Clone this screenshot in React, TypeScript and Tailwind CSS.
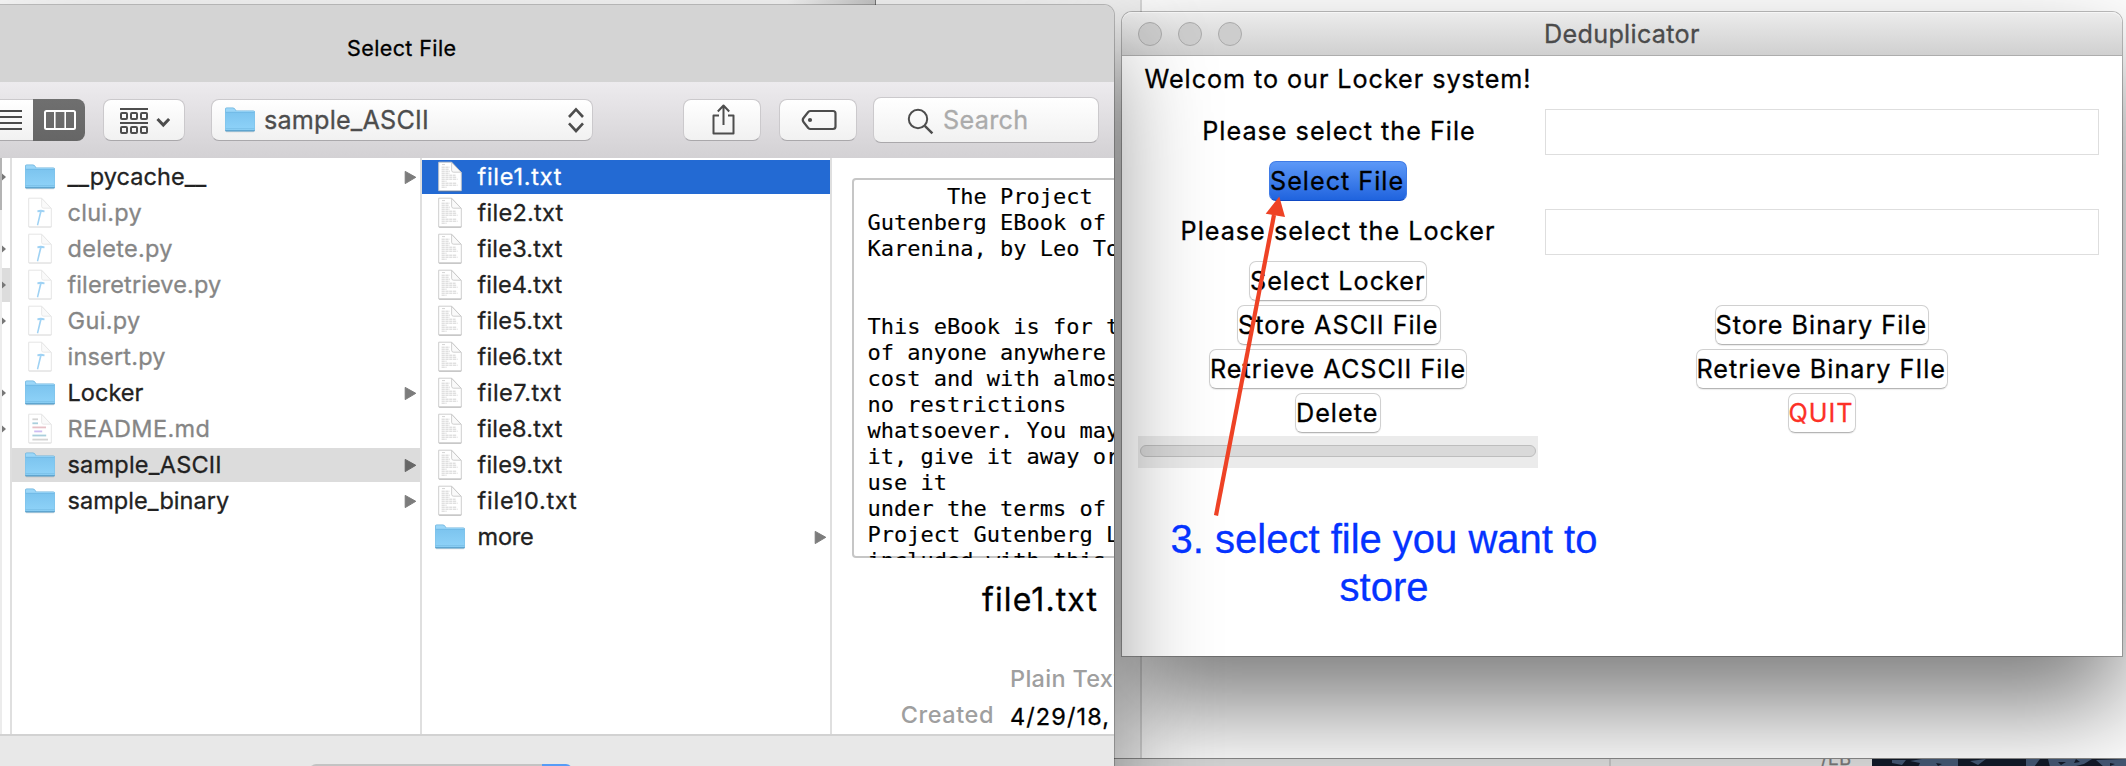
import React from 'react';

function FolderIcon({ className = '' }: { className?: string }) {
  return (
    <svg viewBox="0 0 30 26" className={`h-[26px] w-[30px] shrink-0 ${className}`}>
      <defs>
        <linearGradient id="folderFront" x1="0" y1="0" x2="0" y2="1">
          <stop offset="0" stopColor="#7cc4ef" />
          <stop offset="1" stopColor="#8ed2f8" />
        </linearGradient>
      </defs>
      <rect x="0.5" y="22.5" width="29" height="2.8" rx="1" fill="#000" opacity="0.16" />
      <path d="M0 2.2Q0 0.6 1.6 0.6H7.6Q9 0.6 9.8 1.6L11.4 3.4H28.4Q30 3.4 30 5V23Q30 24.4 28.6 24.4H1.4Q0 24.4 0 23Z" fill="#6db4de" />
      <path d="M0.6 2.4Q0.6 1.2 1.8 1.2H7.6Q8.8 1.2 9.4 2L11 4H28.2Q29.4 4 29.4 5.2V23H0.6Z" fill="#9bd6f8" />
      <rect x="0.6" y="5" width="28.8" height="18" fill="url(#folderFront)" />
      <rect x="0.6" y="4.8" width="28.8" height="0.9" fill="#6fb8e4" />
      <rect x="0.6" y="21" width="28.8" height="0.7" fill="#77bde6" />
      <rect x="0.4" y="22.9" width="29.2" height="1.2" fill="#5fa5cf" />
    </svg>
  );
}

function Page({ children, faded }: { children?: React.ReactNode; faded?: boolean }) {
  return (
    <svg viewBox="0 0 24 32" className="h-8 w-6 shrink-0">
      <rect x="0.8" y="28" width="22.6" height="3" rx="1" fill="#000" opacity={faded ? 0.08 : 0.22} />
      <path d="M0.7 1.2H13.6L23.3 11.4V29.8H0.7Z" fill="#fff" stroke={faded ? '#e2e2e2' : '#c8c8c8'} strokeWidth="0.9" />
      {children}
      <path d="M13.6 1.4V9.2Q13.6 11.2 15.6 11.2H23Z" fill="#fafafa" stroke={faded ? '#e4e4e4' : '#c4c4c4'} strokeWidth="0.8" />
    </svg>
  );
}

function TextIcon() {
  return (
    <Page>
      <path
        d="M4 3.6h3M3.6 6.2h8M3.6 8.2h7.6M3.6 10.2h8.4M3.6 12.2h8M3.6 14.2h14M3.6 16.2h15M3.6 18.2h16M3.6 20.2h5M3.6 22.2h15M3.6 24.2h16M3.6 26.2h5"
        stroke="#c8c8c8"
        strokeWidth="0.8"
        strokeDasharray="3.2 0.6"
      />
    </Page>
  );
}

function PyIcon() {
  return (
    <Page faded>
      <path d="M9.2 13.6Q12.4 12.2 16.6 13.4L16.4 15.2L13.6 14.9L10.2 28.4L8.8 28L11.8 14.9L9.6 15.3Z" fill="#9fd2f4" />
    </Page>
  );
}

function MdIcon() {
  return (
    <Page faded>
      <g strokeWidth="1.8">
        <path d="M4.4 6.3h5.6" stroke="#d4d4d4" />
        <path d="M4.4 10.3h5.6" stroke="#a9cfdc" />
        <path d="M4.4 14.4h13.6" stroke="#e6c0c6" />
        <path d="M6.2 18.4h8" stroke="#cdbdf2" />
        <path d="M4.4 22.5h13.8" stroke="#a9cfdc" />
        <path d="M4.4 26.6h15.6" stroke="#d4d4d4" />
      </g>
    </Page>
  );
}

function Arrow({ dark }: { dark?: boolean }) {
  return (
    <svg viewBox="0 0 13 15" className="h-[15px] w-[13px] shrink-0">
      <path d="M1.2 1.4L11.8 7.3L1.2 13.6Z" fill={dark ? '#666' : '#7c7c7c'} stroke={dark ? '#666' : '#7c7c7c'} strokeLinejoin="round" />
    </svg>
  );
}

type Item = { name: string; kind: 'folder' | 'py' | 'md' | 'txt'; track: string; selected?: 'blue' | 'gray' };

const folderItems: Item[] = [
  { name: '__pycache__', kind: 'folder', track: 'tracking-[0.05px]' },
  { name: 'clui.py', kind: 'py', track: 'tracking-[0.27px]' },
  { name: 'delete.py', kind: 'py', track: 'tracking-[0.29px]' },
  { name: 'fileretrieve.py', kind: 'py', track: 'tracking-[0.11px]' },
  { name: 'Gui.py', kind: 'py', track: 'tracking-[0.36px]' },
  { name: 'insert.py', kind: 'py', track: 'tracking-[0.19px]' },
  { name: 'Locker', kind: 'folder', track: 'tracking-[0.03px]' },
  { name: 'README.md', kind: 'md', track: 'tracking-[0.35px]' },
  { name: 'sample_ASCII', kind: 'folder', track: 'tracking-[0.22px]', selected: 'gray' },
  { name: 'sample_binary', kind: 'folder', track: 'tracking-[0.06px]' },
];

const sampleItems: Item[] = [
  { name: 'file1.txt', kind: 'txt', track: 'tracking-[0.74px]', selected: 'blue' },
  { name: 'file2.txt', kind: 'txt', track: 'tracking-[0.28px]' },
  { name: 'file3.txt', kind: 'txt', track: 'tracking-[0.22px]' },
  { name: 'file4.txt', kind: 'txt', track: 'tracking-[0.12px]' },
  { name: 'file5.txt', kind: 'txt', track: 'tracking-[0.25px]' },
  { name: 'file6.txt', kind: 'txt', track: 'tracking-[0.2px]' },
  { name: 'file7.txt', kind: 'txt', track: 'tracking-[0.5px]' },
  { name: 'file8.txt', kind: 'txt', track: 'tracking-[0.2px]' },
  { name: 'file9.txt', kind: 'txt', track: 'tracking-[0.2px]' },
  { name: 'file10.txt', kind: 'txt', track: 'tracking-[0.78px]' },
  { name: 'more', kind: 'folder', track: 'tracking-[-0.21px]' },
];

function Row({ item }: { item: Item }) {
  const bg = item.selected === 'blue' ? 'bg-[#236ad3]' : item.selected === 'gray' ? 'bg-[#dcdcdc]' : '';
  const muted = item.kind === 'py' || item.kind === 'md';
  const color = item.selected === 'blue' ? 'text-white' : muted ? 'text-[#868686]' : 'text-[#222]';
  return (
    <div className={`flex h-[34px] shrink-0 items-center pl-[13px] pr-[3px] ${bg}`}>
      <div className="flex w-[42.5px] items-center">
        {item.kind === 'folder' && <FolderIcon />}
        {item.kind !== 'folder' && (
          <div className="pb-px pl-[3px]">
            {item.kind === 'txt' && <TextIcon />}
            {item.kind === 'py' && <PyIcon />}
            {item.kind === 'md' && <MdIcon />}
          </div>
        )}
      </div>
      <span className={`flex-1 whitespace-nowrap text-[23.5px] leading-[34px] ${color} ${item.track}`}>{item.name}</span>
      {item.kind === 'folder' && <Arrow dark={item.selected === 'gray'} />}
    </div>
  );
}

const toolButton =
  'flex shrink-0 items-center border border-[#cbc9cc] border-b-[#aaa8ab] bg-linear-to-b from-white to-[#f1f1f1] rounded-[8px]';

function Toolbar() {
  return (
    <div className="flex h-[76px] shrink-0 items-center bg-linear-to-b from-[#edebee] to-[#d3d1d4]">
      <div className="flex h-[42px] w-[85px] shrink-0 overflow-hidden rounded-r-[8px]">
        <div className="h-full w-[33px] border-y border-t-[#cbc9cc] border-b-[#aaa8ab] bg-linear-to-b from-white to-[#f1f1f1]">
          <svg viewBox="0 0 33 40" className="h-10 w-[33px]">
            <path d="M0 11h22M0 17h22M0 23h22M0 29h22" stroke="#4a4a4a" strokeWidth="2" />
          </svg>
        </div>
        <div className="h-full w-[52px] bg-linear-to-b from-[#6f6f6f] to-[#666]">
          <svg viewBox="0 0 52 42" className="h-[42px] w-[52px]">
            <rect x="12" y="12" width="30" height="18" rx="1.5" fill="none" stroke="#fff" strokeWidth="2" />
            <path d="M21.8 12v18M32.2 12v18" stroke="#fff" strokeWidth="1.6" />
          </svg>
        </div>
      </div>
      <div className={`ml-[18px] h-[42px] w-[82px] ${toolButton}`}>
        <svg viewBox="0 0 80 40" className="h-10 w-20" fill="none" stroke="#4d4d4d">
          <path d="M16 9h28M16 23h28" strokeWidth="2" />
          <g strokeWidth="2">
            <rect x="17" y="13" width="6" height="6" rx="1" />
            <rect x="27" y="13" width="6" height="6" rx="1" />
            <rect x="37" y="13" width="6" height="6" rx="1" />
            <rect x="17" y="27" width="6" height="6" rx="1" />
            <rect x="27" y="27" width="6" height="6" rx="1" />
            <rect x="37" y="27" width="6" height="6" rx="1" />
          </g>
          <path d="M53.5 19l5.8 6l5.8-6" strokeWidth="3" />
        </svg>
      </div>
      <div className={`ml-[26px] h-[42px] w-[382px] pl-[13px] pr-[7px] ${toolButton}`}>
        <FolderIcon />
        <span className="ml-[9px] flex-1 text-[25.2px] leading-10 tracking-[0.19px] text-[#4d4d4d]">sample_ASCII</span>
        <svg viewBox="0 0 18 26" className="h-[26px] w-[18px]" fill="none" stroke="#4d4d4d" strokeWidth="2.6">
          <path d="M2 10l7-7.600l7 7.600M2 16.400l7 7.600l7-7.600" />
        </svg>
      </div>
      <div className={`ml-[90px] h-[42px] w-[78px] ${toolButton}`}>
        <svg viewBox="0 0 76 40" className="h-10 w-[76px]" fill="none" stroke="#4d4d4d" strokeWidth="2">
          <path d="M35 15.500h-5.500v18h20v-18h-5.500M39.500 25V6M33.800 11.500l5.700-6l5.700 6" strokeLinejoin="round" />
        </svg>
      </div>
      <div className={`ml-[18px] h-[42px] w-[78px] ${toolButton}`}>
        <svg viewBox="0 0 76 40" className="h-10 w-[76px]">
          <path d="M30.500 11H53q2.500 0 2.500 2.500v13q0 2.500-2.500 2.500H30.500q-1.300 0-2.300-1L23.500 22q-1.500-2 0-4L28.200 12q1-1 2.300-1z" fill="none" stroke="#4d4d4d" strokeWidth="2.200" />
          <circle cx="30" cy="20" r="2.100" fill="#4d4d4d" />
        </svg>
      </div>
      <div className={`ml-4 h-[46px] w-[226px] ${toolButton}`}>
        <svg viewBox="0 0 70 44" className="h-11 w-[70px]" fill="none" stroke="#4d4d4d">
          <circle cx="44" cy="21" r="9.200" strokeWidth="2" />
          <path d="M50.800 27.800l7.600 7.600" strokeWidth="2.400" />
        </svg>
        <span className="-ml-px text-[25.2px] leading-[44px] tracking-[0.3px] text-[#ababab]">Search</span>
      </div>
    </div>
  );
}

const preview = [
  '      The Project',
  'Gutenberg EBook of',
  'Karenina, by Leo To',
  '',
  '',
  'This eBook is for t',
  'of anyone anywhere',
  'cost and with almos',
  'no restrictions',
  'whatsoever. You may',
  'it, give it away or',
  'use it',
  'under the terms of',
  'Project Gutenberg L',
  'included with this',
].join('\n');

const parentRows = [true, false, true, true, true, false, true, true];

function SelectFileDialog() {
  return (
    <section className="absolute left-0 top-[5px] flex h-[861px] w-[1114px] flex-col overflow-hidden rounded-tr-[10px] bg-[#e8e8e8] shadow-[0_0_0_1px_rgba(0,0,0,0.22),0_50px_100px_rgba(0,0,0,0.42)]">
      <header className="flex h-[77px] shrink-0 bg-[#d4d4d4] pl-[347px] pt-[10px]">
        <h1 className="text-[21.5px] leading-[66px] tracking-[0.4px] text-black">Select File</h1>
      </header>
      <Toolbar />
      <div className="flex h-[576px] shrink-0 bg-white">
        <div className="flex w-[2px] flex-col bg-[#ececec]">
          <div className="h-[52px] bg-[#b4b4b4]" />
        </div>
        <div className="flex w-[10px] flex-col gap-[2px] border-r-2 border-[#dfdfdf] pt-[2px]">
          {parentRows.map((arrow, i) => (
            <div key={i} className={`flex h-[34px] items-center ${i === 3 ? 'bg-[#dcdcdc]' : ''}`}>
              {arrow && (
                <svg viewBox="0 0 4 8" className="h-2 w-1">
                  <path d="M0 0.500L4 4L0 7.500z" fill="#777" />
                </svg>
              )}
            </div>
          ))}
        </div>
        <div className="flex w-[410px] flex-col gap-[2px] border-r-2 border-[#dfdfdf] pt-[2px]">
          {folderItems.map((item) => (
            <Row key={item.name} item={item} />
          ))}
        </div>
        <div className="flex w-[410px] flex-col gap-[2px] border-r-2 border-[#dfdfdf] pt-[2px]">
          {sampleItems.map((item) => (
            <Row key={item.name} item={item} />
          ))}
        </div>
        <div className="flex w-[282px] flex-col overflow-hidden pl-5 pt-5">
          <pre className="h-[380px] w-[380px] shrink-0 overflow-hidden rounded-[4px] pl-[15.5px] pt-[6px] font-['DejaVu_Sans_Mono',monospace] text-[22px] leading-[26px] text-black shadow-[inset_0_0_0_2px_#c6c6c6] [-webkit-text-stroke:0.15px]">
            {preview}
          </pre>
          <p className="mt-5 pl-[130px] text-[32px] leading-[44px] tracking-[1.1px] text-black">file1.txt</p>
          <dl className="mt-[39px] grid w-[380px] grid-cols-[142px_1fr] gap-x-4 text-[23.5px] leading-9">
            <dt />
            <dd className="font-medium tracking-[0.3px] text-[#9f9f9f] [-webkit-text-stroke:0]">Plain Text</dd>
            <dt className="text-right font-medium tracking-[0.55px] text-[#9f9f9f] [-webkit-text-stroke:0]">Created</dt>
            <dd className="pt-[2px] tracking-[1.1px] text-black">4/29/18,</dd>
          </dl>
        </div>
      </div>
      <footer className="flex h-[100px] shrink-0 border-t-2 border-[#d2d2d2] pl-[310px] pt-7">
        <div className="h-11 w-[232px] rounded-l-[6px] border-2 border-r-0 border-[#c3c3c3] bg-white" />
        <div className="h-11 w-[30px] rounded-r-[6px] bg-[#579cf6]" />
      </footer>
    </section>
  );
}

const tk = 'text-[25.2px] tracking-[1px] whitespace-nowrap';

function TkButton({ children, width, variant }: { children: string; width: string; variant?: 'primary' | 'quit' }) {
  const look =
    variant === 'primary'
      ? 'bg-linear-to-b from-[#5c98f7] to-[#1f63de] border-[#3f7be6] border-b-[#0f49c4]'
      : 'bg-white/80 border-[#d0d0d0] border-b-[#b5b5b5] shadow-[0_1px_1px_rgba(0,0,0,0.08)]';
  return (
    <button className={`flex h-10 items-center rounded-[7px] border text-left leading-[38px] ${tk} ${look} ${width} ${variant === 'quit' ? 'text-[#fc3127]' : 'text-black'}`}>
      {children}
    </button>
  );
}

function Pair({ left, right }: { left: React.ReactNode; right?: React.ReactNode }) {
  return (
    <div className="grid grid-cols-[400px_567px]">
      <div className="flex justify-center">{left}</div>
      <div className="flex justify-center">{right}</div>
    </div>
  );
}

function DeduplicatorWindow() {
  return (
    <section className="absolute left-[1122px] top-3 flex h-[644px] w-[1000px] flex-col rounded-t-[10px] bg-white shadow-[0_0_0_1px_rgba(0,0,0,0.25),0_50px_100px_rgba(0,0,0,0.52)]">
      <header className="flex h-11 shrink-0 items-center rounded-t-[10px] border-b border-[#adadad] bg-linear-to-b from-[#ececec] to-[#d0d0d0] pl-4 shadow-[inset_0_1px_0_#f6f6f6]">
        <div className="flex w-[406px] gap-4">
          <span className="size-6 rounded-full border border-[#aaa] bg-[#cdcdcd]" />
          <span className="size-6 rounded-full border border-[#aaa] bg-[#cdcdcd]" />
          <span className="size-6 rounded-full border border-[#aaa] bg-[#cdcdcd]" />
        </div>
        <h2 className="pt-px text-[25.2px] leading-[44px] tracking-[0.3px] text-[#4b4b4b]">Deduplicator</h2>
      </header>
      <div className="flex flex-col pl-4">
        <p className="h-[45px] whitespace-nowrap pl-[6.5px] text-[25.2px] leading-[46px] tracking-[0.94px] text-black">Welcom to our Locker system!</p>
        <Pair
          left={<label className={`h-[60px] pl-[2px] leading-[60px] text-black ${tk}`}>Please select the File</label>}
          right={<div className="mt-2 h-[46px] w-[554px] border border-[#dedede] bg-white" />}
        />
        <Pair left={<TkButton width="w-[138px]" variant="primary">Select File</TkButton>} />
        <Pair
          left={<label className={`h-[60px] leading-[60px] text-black ${tk}`}>Please select the Locker</label>}
          right={<div className="mt-2 h-[46px] w-[554px] border border-[#dedede] bg-white" />}
        />
        <div className="flex flex-col gap-1">
          <Pair left={<TkButton width="w-[178px]">Select Locker</TkButton>} />
          <Pair
            left={<TkButton width="ml-[2px] w-[204px]">Store ASCII File</TkButton>}
            right={<TkButton width="w-[214px]">Store Binary File</TkButton>}
          />
          <Pair
            left={<TkButton width="w-[258px]">Retrieve ACSCII File</TkButton>}
            right={<TkButton width="w-[252px]">Retrieve Binary FIle</TkButton>}
          />
          <Pair left={<TkButton width="w-[86px]">Delete</TkButton>} right={<TkButton width="w-[68px]" variant="quit">QUIT</TkButton>} />
        </div>
        <div className="mt-[3px] h-8 w-[400px] bg-[#ebebeb] px-[2px] pt-[9px]">
          <div className="h-3 rounded-full border border-[#bdbdbd] bg-[#d9d9d9]" />
        </div>
      </div>
    </section>
  );
}

function Backdrop() {
  return (
    <div className="absolute inset-0 flex flex-col">
      <div className="flex h-[758px]">
        <div className="w-[875px] bg-linear-to-r from-[#f7f7f7] from-90% to-[#c4c4c4]" />
        <div className="w-[265px] border-l border-[#777] bg-[#f4f4f4]" />
        <div className="flex-1 border-l-2 border-[#dadada] bg-white" />
      </div>
      <div className="flex h-2 border-t border-[#8a8a8a] bg-[#dcdcdc]">
        <div className="w-[1611px] border-r-2 border-[#c2c2c2]" />
        <div className="flex h-[7px] w-[261px] items-end overflow-hidden pl-[210px] text-[18px] leading-[15px] tracking-[0.5px] text-[#777]">/EB</div>
        <svg viewBox="0 0 254 8" className="h-2 w-[254px]">
          <rect width="254" height="8" fill="#121a29" />
          <path d="M20 1l14 0l-4 5l-10-2zM38 2l12-2l36 0l0 8l-40 0l2-4zM98 2l16-2l-8 6zM154 0l14 0l-6 8l-8 0zM176 0l44 0l-8 5l-12 3l-22 0zM224 1l30-1l0 7l-22 1z" fill="#445874" />
          <path d="M44 3l3 1zM64 4l6 1l-4 2zM186 3l8 0l-5 3zM204 0l4 3l-6 1zM238 4l5 1l-5 2zM78 0l3 4z" fill="#121a29" />
        </svg>
      </div>
    </div>
  );
}

function Annotation() {
  return (
    <>
      <svg viewBox="0 0 90 330" className="absolute left-[1204px] top-[190px] h-[330px] w-[90px]">
        <path d="M12 325.500L70 25" stroke="#ee4225" strokeWidth="4.200" />
        <path d="M75.300 6.500L61.700 23.700L81 27z" fill="#ee4225" />
      </svg>
      <p className="absolute left-[1164px] top-[515px] w-[440px] text-center font-['Liberation_Sans',Arial,sans-serif] text-[40px] leading-[48px] text-[#0433ff]">
        3. select file you want to
        <br />
        store
      </p>
    </>
  );
}

export default function App() {
  return (
    <main className="relative h-[766px] w-[2126px] overflow-hidden bg-white font-['Inter',sans-serif] [-webkit-text-stroke:0.3px]">
      <Backdrop />
      <DeduplicatorWindow />
      <SelectFileDialog />
      <Annotation />
    </main>
  );
}
